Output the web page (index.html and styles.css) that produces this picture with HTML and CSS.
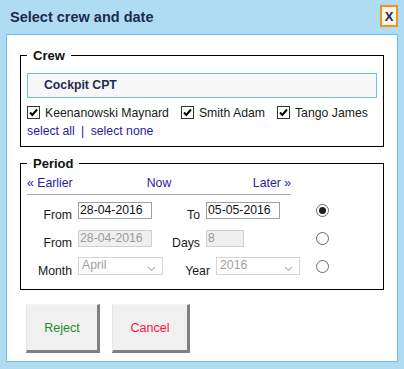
FILE: index.html
```html
<!DOCTYPE html>
<html lang="en">
<head>
    <meta charset="UTF-8">
    <title>Select crew and date</title>
    <link rel="stylesheet" href="styles.css">
</head>
<body>
    <header class="dlg-head">
        <h1>Select crew and date</h1>
        <button class="close">X</button>
    </header>
    <section class="panel">
        <fieldset class="crew">
            <legend>Crew</legend>
            <div class="group">Cockpit CPT</div>
            <div class="checks">
                <label class="check"><span class="box"><svg viewBox="0 0 11 11" width="11" height="11"><path d="M2 5.5 L4.3 8 L9 2.5" fill="none" stroke="#000" stroke-width="2"/></svg></span>Keenanowski Maynard</label>
                <label class="check"><span class="box"><svg viewBox="0 0 11 11" width="11" height="11"><path d="M2 5.5 L4.3 8 L9 2.5" fill="none" stroke="#000" stroke-width="2"/></svg></span>Smith Adam</label>
                <label class="check"><span class="box"><svg viewBox="0 0 11 11" width="11" height="11"><path d="M2 5.5 L4.3 8 L9 2.5" fill="none" stroke="#000" stroke-width="2"/></svg></span>Tango James</label>
            </div>
            <div class="links">
                <a href="#">select all</a>
                <span class="sep">|</span>
                <a href="#">select none</a>
            </div>
        </fieldset>

        <fieldset class="period">
            <legend>Period</legend>
            <nav class="nav">
                <a href="#" class="prev">&laquo; Earlier</a>
                <a href="#" class="now">Now</a>
                <a href="#" class="next">Later &raquo;</a>
            </nav>
            <div class="row">
                <span class="lbl">From</span>
                <div class="cell"><input class="txt date" type="text" value="28-04-2016"></div>
                <span class="lbl2">To</span>
                <div class="cell2"><input class="txt date" type="text" value="05-05-2016"></div>
                <span class="radio checked"></span>
            </div>
            <div class="row">
                <span class="lbl">From</span>
                <div class="cell"><input class="txt date" type="text" value="28-04-2016" disabled></div>
                <span class="lbl2">Days</span>
                <div class="cell2"><input class="txt days" type="text" value="8" disabled></div>
                <span class="radio"></span>
            </div>
            <div class="row">
                <span class="lbl">Month</span>
                <div class="cell"><div class="sel month">April<svg viewBox="0 0 9 6" width="9" height="6"><path d="M1 1 L4.5 4.5 L8 1" fill="none" stroke="#b8b8b8" stroke-width="1.2"/></svg></div></div>
                <span class="lbl2 wide">Year</span>
                <div class="cell2 narrow"><div class="sel year">2016<svg viewBox="0 0 9 6" width="9" height="6"><path d="M1 1 L4.5 4.5 L8 1" fill="none" stroke="#b8b8b8" stroke-width="1.2"/></svg></div></div>
                <span class="radio"></span>
            </div>
        </fieldset>

        <div class="actions">
            <button class="btn reject">Reject</button>
            <button class="btn cancel">Cancel</button>
        </div>
    </section>
</body>
</html>
```

FILE: styles.css
```css
html, body {
    margin: 0;
    padding: 0;
}

body {
    background-color: #afdcf2;
    font-family: "Liberation Sans", Arial, sans-serif;
    font-size: 12.25px;
    color: #1a1a1a;
    width: 404px;
    height: 369px;
}

.dlg-head {
    display: flex;
    align-items: center;
    justify-content: space-between;
    height: 34px;
    padding: 0 6px 0 10px;
}

.dlg-head h1 {
    margin: 0;
    font-size: 14.5px;
    font-weight: bold;
    color: #1c2b4f;
}

.close {
    width: 18px;
    height: 22px;
    margin-top: -2px;
    padding: 0;
    background-color: #fff4df;
    border: 2px solid #e8952c;
    font-family: "Liberation Sans", Arial, sans-serif;
    font-size: 13px;
    font-weight: bold;
    color: #1c2b4f;
}

.panel {
    margin: 0 6px;
    padding: 13px 13px 0;
    background-color: #ffffff;
    border: 1px solid #6dbde8;
    box-sizing: border-box;
    height: 328px;
}

fieldset {
    margin: 0;
    padding: 0 6px 7px;
    border: 1px solid #000;
}

legend {
    padding: 0 6px;
    font-weight: bold;
    font-size: 13px;
    line-height: 15px;
    color: #111;
}

.group {
    margin-top: 10px;
    height: 23px;
    line-height: 23px;
    padding-left: 16px;
    background-color: #f7f7f7;
    border: 1px solid #6dbde8;
    font-weight: bold;
    color: #1c2b4f;
}

.checks {
    display: flex;
    gap: 12px;
    margin-top: 7px;
    height: 15px;
    align-items: center;
}

.check {
    display: flex;
    align-items: center;
    gap: 5px;
    white-space: nowrap;
}

.box {
    width: 11px;
    height: 11px;
    border: 1px solid #333;
    background-color: #fff;
    display: flex;
}

.links {
    margin-top: 4px;
    line-height: 15px;
}

a {
    color: #2a20a8;
    text-decoration: none;
}

.sep {
    color: #2a20a8;
    margin: 0 3px;
}

.period {
    margin-top: 9px;
    padding-bottom: 9px;
}

.nav {
    display: grid;
    grid-template-columns: 1fr auto 1fr;
    width: 264px;
    margin-top: 5px;
    padding-bottom: 3px;
    border-bottom: 1px solid #aaaaaa;
    line-height: 15px;
}

.nav .next {
    text-align: right;
}

.row {
    display: flex;
    align-items: center;
    height: 28px;
}

.nav + .row {
    margin-top: 1px;
}

.lbl {
    width: 45px;
    margin-right: 6px;
    text-align: right;
    padding-top: 10px;
}

.lbl2 {
    width: 34px;
    margin-right: 6px;
    text-align: right;
    padding-top: 10px;
}

.lbl2.wide {
    width: 44px;
}

.cell {
    width: 88px;
}

.cell2 {
    width: 110px;
}

.cell2.narrow {
    width: 100px;
}

.txt {
    box-sizing: border-box;
    height: 17px;
    margin: 0;
    padding: 0 0 0 1px;
    border: 1px solid #a0a0a0;
    font-family: "Liberation Sans", Arial, sans-serif;
    font-size: 12.25px;
    line-height: 15px;
    color: #111;
    background-color: #fff;
    display: block;
}

.txt.date {
    width: 74px;
}

.txt.days {
    width: 38px;
}

.txt:disabled {
    background-color: #efefef;
    border-color: #cfcfcf;
    color: #9a9a9a;
}

.sel {
    box-sizing: border-box;
    height: 18px;
    padding: 1px 6px 0 3px;
    border: 1px solid #d4d4d4;
    color: #a0a0a0;
    line-height: 13px;
    display: flex;
    justify-content: space-between;
}

.sel svg {
    margin-top: 7px;
}

.sel.month {
    width: 85px;
}

.sel.year {
    width: 84px;
}

.radio {
    box-sizing: border-box;
    width: 13px;
    height: 13px;
    border: 1px solid #6a6a6a;
    border-radius: 50%;
    background-color: #fff;
    display: flex;
    align-items: center;
    justify-content: center;
    margin-top: 1px;
}

.radio.checked::after {
    content: "";
    width: 7px;
    height: 7px;
    border-radius: 50%;
    background-color: #1e1e1e;
}

.actions {
    display: flex;
    gap: 12px;
    margin: 14px 0 0 6px;
}

.btn {
    box-sizing: border-box;
    height: 49px;
    padding: 0;
    background-color: #f0f0f0;
    border-top: 1px solid #f4f4f4;
    border-left: 1px solid #e6e6e6;
    border-right: 3px solid #808080;
    border-bottom: 3px solid #808080;
    font-family: "Liberation Sans", Arial, sans-serif;
    font-size: 12.5px;
}

.reject {
    width: 74px;
    color: #1f8a2a;
}

.cancel {
    width: 78px;
    color: #ff1040;
}
```
